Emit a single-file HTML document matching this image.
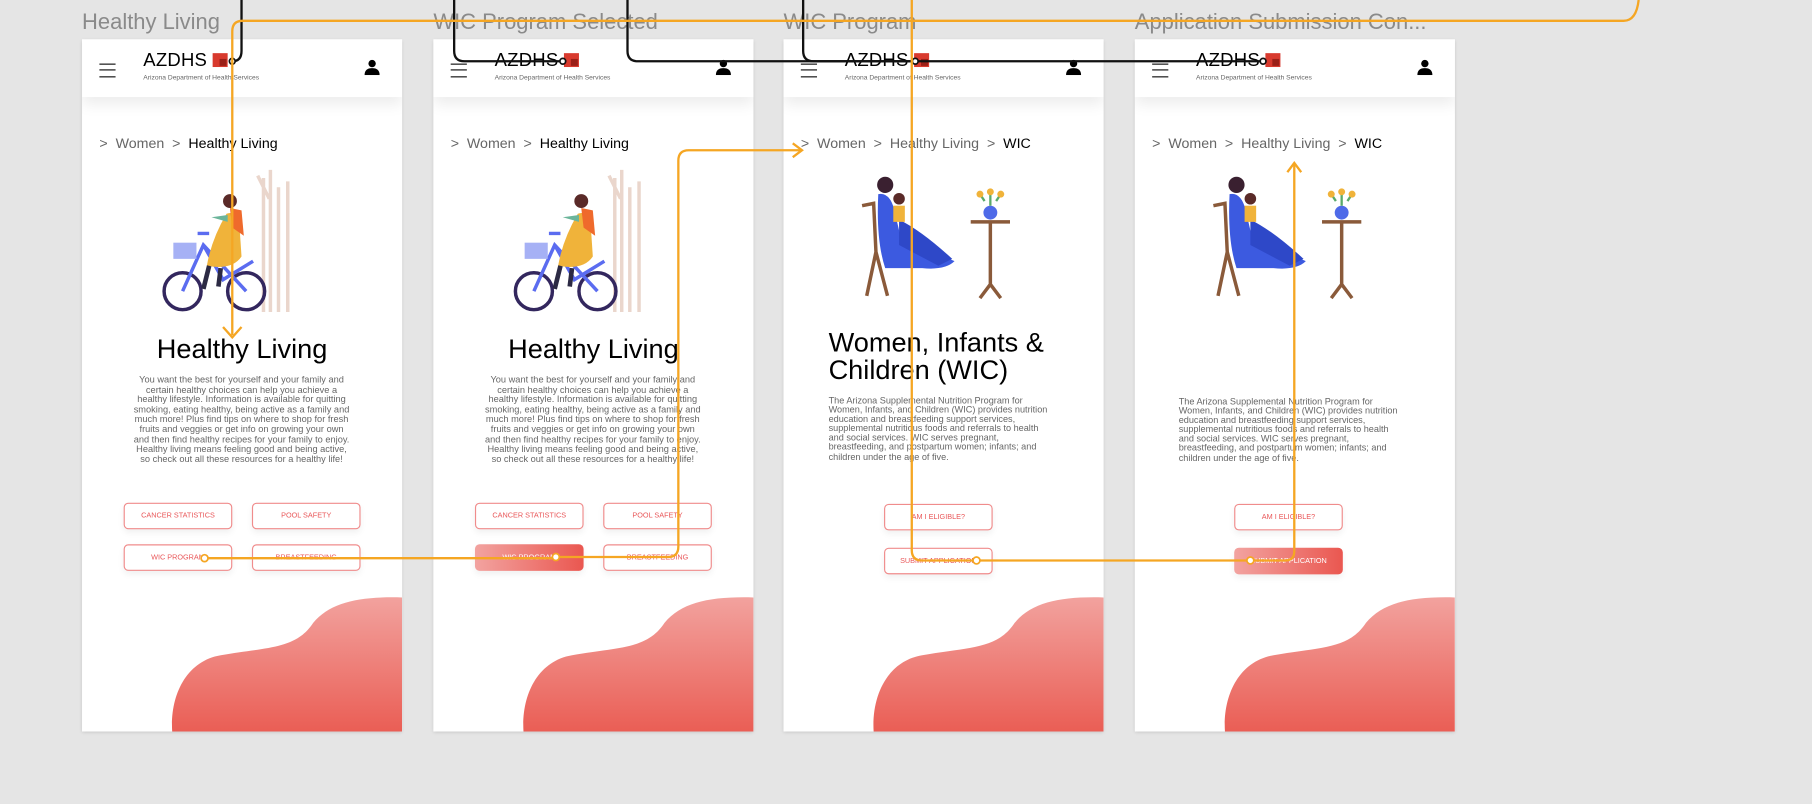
<!DOCTYPE html>
<html><head><meta charset="utf-8">
<style>
html,body{margin:0;padding:0;background:#e5e5e5;overflow:hidden;width:1812px;height:804px;font-family:"Liberation Sans",sans-serif;}
#s{position:absolute;left:0;top:0;width:1568px;height:696px;transform:scale(1.15561);transform-origin:0 0;}
.t{position:absolute;top:9px;font-size:19px;color:#8a8a8a;white-space:nowrap;}
.f{position:absolute;top:34px;width:277px;height:599px;background:#fff;overflow:hidden;box-shadow:0 1px 3px rgba(0,0,0,.15);}
.hd{position:absolute;left:0;top:0;width:277px;height:50px;background:#fff;box-shadow:0 6px 12px rgba(0,0,0,.08);z-index:2}
.hb{position:absolute;left:15px;top:21px;width:14px;height:10px;border-top:1.5px solid #111;border-bottom:1.5px solid #111;}
.hb:after{content:"";position:absolute;left:0;top:3.5px;width:14px;height:1.5px;background:#111}
.az{position:absolute;left:53px;top:10px;font-size:16px;color:#000;letter-spacing:.2px}
.lg{position:absolute;left:113px;top:12px;width:13px;height:12px;background:#d83a2e;}
.lg:after{content:"";position:absolute;left:6px;top:5px;width:6px;height:6px;background:#9a2018}
.sub{position:absolute;left:53px;top:31px;font-size:5.8px;color:#666}
.us{position:absolute;left:244px;top:17px;width:14px;height:14px}
.bc{position:absolute;left:15px;top:83px;font-size:12.3px;color:#666;white-space:nowrap}
.bc b{font-weight:normal;color:#000}
.h1{position:absolute;left:0;width:277px;text-align:center;font-size:23.5px;color:#000}
.p{position:absolute;font-size:8px;line-height:8.6px;color:#666}
.btn{position:absolute;width:94px;height:23px;box-sizing:border-box;border:1px solid #f08c8c;border-radius:4px;font-size:6.3px;color:#e9585a;text-align:center;line-height:21px;box-shadow:0 3px 6px rgba(0,0,0,.06);white-space:nowrap;background:#fff}
.sel{background:linear-gradient(90deg,#f2a3a0,#ea5750);color:#fff;border:none;line-height:23px}
.blob{position:absolute;left:0;top:0}
</style></head><body><div id="s">

<div class="t" style="left:71px">Healthy Living</div>
<div class="t" style="left:375px">WIC Program Selected</div>
<div class="t" style="left:678px">WIC Program</div>
<div class="t" style="left:982px">Application Submission Con...</div>

<div class="f" style="left:71px">
 <div class="hd"><div class="hb"></div><div class="az">AZDHS</div><div class="lg"></div><div class="sub">Arizona Department of Health Services</div>
 <svg class="us" viewBox="0 0 14 14"><circle cx="7" cy="4" r="3.2" fill="#000"/><path d="M0.5 14 Q0.5 8 7 8 Q13.5 8 13.5 14Z" fill="#000"/></svg></div>
 <div class="bc">&gt;&nbsp; Women &nbsp;&gt;&nbsp; <b>Healthy Living</b></div>
 <svg style="position:absolute;left:60px;top:108px" width="140" height="130" viewBox="0 0 140 130">
  <g stroke="#ead6cc" stroke-width="3" fill="none"><path d="M97 128V12M103 128V5M110 128V20M118 128V15M92 10L102 30"/></g>
  <circle cx="27" cy="110" r="16" stroke="#33275e" stroke-width="3" fill="none"/><circle cx="82" cy="110" r="16" stroke="#33275e" stroke-width="3" fill="none"/>
  <path d="M27 110L45 70L82 110M45 70L62 100L88 84M40 60H50" stroke="#5b6cf0" stroke-width="3" fill="none"/>
  <rect x="19" y="68" width="20" height="14" fill="#a6b1f5"/>
  <path d="M65 43Q72 40 76 50L78 80Q70 92 48 88Q52 65 65 43Z" fill="#f0b33a"/>
  <path d="M68 38L78 40L80 62L70 55Z" fill="#ef6a2c"/>
  <circle cx="68" cy="32" r="6" fill="#5a2a28"/>
  <path d="M52 46L66 50L66 44Z" fill="#6bb59a"/>
  <path d="M50 88L45 108M60 90L58 106" stroke="#2c2a44" stroke-width="4"/>
 </svg>
 <div class="h1" style="top:255px">Healthy Living</div>
 <div class="p" style="left:43px;width:190px;text-align:center;top:291px">You want the best for yourself and your family and certain healthy choices can help you achieve a healthy lifestyle. Information is available for quitting smoking, eating healthy, being active as a family and much more! Plus find tips on where to shop for fresh fruits and veggies or get info on growing your own and then find healthy recipes for your family to enjoy. Healthy living means feeling good and being active, so check out all these resources for a healthy life!</div>
 <div class="btn" style="left:36px;top:401px">CANCER STATISTICS</div>
 <div class="btn" style="left:147px;top:401px">POOL SAFETY</div>
 <div class="btn" style="left:36px;top:437px">WIC PROGRAM</div>
 <div class="btn" style="left:147px;top:437px">BREASTFEEDING</div>
 <svg class="blob" width="277" height="599"><defs><linearGradient id="g1" x1="0" y1="0" x2="0" y2="1"><stop offset="0" stop-color="#f2a29e"/><stop offset="1" stop-color="#ea5e55"/></linearGradient></defs><path d="M78,599 C76,568 90,538 120,533 C160,526 185,528 200,505 C215,487 240,482 277,483 V599 Z" fill="url(#g1)"/></svg>
</div>

<div class="f" style="left:375px">
 <div class="hd"><div class="hb"></div><div class="az">AZDHS</div><div class="lg"></div><div class="sub">Arizona Department of Health Services</div>
 <svg class="us" viewBox="0 0 14 14"><circle cx="7" cy="4" r="3.2" fill="#000"/><path d="M0.5 14 Q0.5 8 7 8 Q13.5 8 13.5 14Z" fill="#000"/></svg></div>
 <div class="bc">&gt;&nbsp; Women &nbsp;&gt;&nbsp; <b>Healthy Living</b></div>
 <svg style="position:absolute;left:60px;top:108px" width="140" height="130" viewBox="0 0 140 130">
  <g stroke="#ead6cc" stroke-width="3" fill="none"><path d="M97 128V12M103 128V5M110 128V20M118 128V15M92 10L102 30"/></g>
  <circle cx="27" cy="110" r="16" stroke="#33275e" stroke-width="3" fill="none"/><circle cx="82" cy="110" r="16" stroke="#33275e" stroke-width="3" fill="none"/>
  <path d="M27 110L45 70L82 110M45 70L62 100L88 84M40 60H50" stroke="#5b6cf0" stroke-width="3" fill="none"/>
  <rect x="19" y="68" width="20" height="14" fill="#a6b1f5"/>
  <path d="M65 43Q72 40 76 50L78 80Q70 92 48 88Q52 65 65 43Z" fill="#f0b33a"/>
  <path d="M68 38L78 40L80 62L70 55Z" fill="#ef6a2c"/>
  <circle cx="68" cy="32" r="6" fill="#5a2a28"/>
  <path d="M52 46L66 50L66 44Z" fill="#6bb59a"/>
  <path d="M50 88L45 108M60 90L58 106" stroke="#2c2a44" stroke-width="4"/>
 </svg>
 <div class="h1" style="top:255px">Healthy Living</div>
 <div class="p" style="left:43px;width:190px;text-align:center;top:291px">You want the best for yourself and your family and certain healthy choices can help you achieve a healthy lifestyle. Information is available for quitting smoking, eating healthy, being active as a family and much more! Plus find tips on where to shop for fresh fruits and veggies or get info on growing your own and then find healthy recipes for your family to enjoy. Healthy living means feeling good and being active, so check out all these resources for a healthy life!</div>
 <div class="btn" style="left:36px;top:401px">CANCER STATISTICS</div>
 <div class="btn" style="left:147px;top:401px">POOL SAFETY</div>
 <div class="btn sel" style="left:36px;top:437px">WIC PROGRAM</div>
 <div class="btn" style="left:147px;top:437px">BREASTFEEDING</div>
 <svg class="blob" width="277" height="599"><path d="M78,599 C76,568 90,538 120,533 C160,526 185,528 200,505 C215,487 240,482 277,483 V599 Z" fill="url(#g1)"/></svg>
</div>

<div class="f" style="left:678px">
 <div class="hd"><div class="hb"></div><div class="az">AZDHS</div><div class="lg"></div><div class="sub">Arizona Department of Health Services</div>
 <svg class="us" viewBox="0 0 14 14"><circle cx="7" cy="4" r="3.2" fill="#000"/><path d="M0.5 14 Q0.5 8 7 8 Q13.5 8 13.5 14Z" fill="#000"/></svg></div>
 <div class="bc">&gt;&nbsp; Women &nbsp;&gt;&nbsp; Healthy Living &nbsp;&gt;&nbsp; <b>WIC</b></div>
 <svg style="position:absolute;left:60px;top:114px" width="140" height="112" viewBox="0 0 140 112">
  <path d="M8 30L18 28L20 70L12 108M20 70L30 108" stroke="#8a5a3a" stroke-width="3" fill="none"/>
  <circle cx="28" cy="12" r="7" fill="#3a2030"/>
  <path d="M22 20Q32 18 36 34L42 60Q70 70 88 78Q80 86 60 84L28 84Q20 60 22 20Z" fill="#3c5ae0"/>
  <path d="M40 42Q60 52 86 76L74 82L40 64Z" fill="#2e48c8"/>
  <circle cx="40" cy="24" r="5" fill="#5a2a28"/><rect x="35" y="30" width="10" height="14" fill="#f0b33a"/>
  <path d="M102 44H136M119 44V98M110 110L119 98L128 110" stroke="#8a5a3a" stroke-width="3" fill="none"/>
  <circle cx="119" cy="36" r="6" fill="#4e6ae8"/><path d="M119 30V20M114 26L110 20M124 26L128 20" stroke="#5aaa6a" stroke-width="2"/><circle cx="110" cy="20" r="3" fill="#f0b33a"/><circle cx="128" cy="20" r="3" fill="#f0b33a"/><circle cx="119" cy="18" r="3" fill="#f0b33a"/>
 </svg>
 <div class="h1" style="top:250px;left:39px;text-align:left;line-height:24px">Women, Infants &amp;<br>Children (WIC)</div>
 <div class="p" style="left:39px;width:192px;top:309px;line-height:8.1px;font-size:7.9px">The Arizona Supplemental Nutrition Program for Women, Infants, and Children (WIC) provides nutrition education and breastfeeding support services, supplemental nutritious foods and referrals to health and social services. WIC serves pregnant, breastfeeding, and postpartum women; infants; and children under the age of five.</div>
 <div class="btn" style="left:87px;top:402px">AM I ELIGIBLE?</div>
 <div class="btn" style="left:87px;top:440px">SUBMIT APPLICATION</div>
 <svg class="blob" width="277" height="599"><path d="M78,599 C76,568 90,538 120,533 C160,526 185,528 200,505 C215,487 240,482 277,483 V599 Z" fill="url(#g1)"/></svg>
</div>

<div class="f" style="left:982px">
 <div class="hd"><div class="hb"></div><div class="az">AZDHS</div><div class="lg"></div><div class="sub">Arizona Department of Health Services</div>
 <svg class="us" viewBox="0 0 14 14"><circle cx="7" cy="4" r="3.2" fill="#000"/><path d="M0.5 14 Q0.5 8 7 8 Q13.5 8 13.5 14Z" fill="#000"/></svg></div>
 <div class="bc">&gt;&nbsp; Women &nbsp;&gt;&nbsp; Healthy Living &nbsp;&gt;&nbsp; <b>WIC</b></div>
 <svg style="position:absolute;left:60px;top:114px" width="140" height="112" viewBox="0 0 140 112">
  <path d="M8 30L18 28L20 70L12 108M20 70L30 108" stroke="#8a5a3a" stroke-width="3" fill="none"/>
  <circle cx="28" cy="12" r="7" fill="#3a2030"/>
  <path d="M22 20Q32 18 36 34L42 60Q70 70 88 78Q80 86 60 84L28 84Q20 60 22 20Z" fill="#3c5ae0"/>
  <path d="M40 42Q60 52 86 76L74 82L40 64Z" fill="#2e48c8"/>
  <circle cx="40" cy="24" r="5" fill="#5a2a28"/><rect x="35" y="30" width="10" height="14" fill="#f0b33a"/>
  <path d="M102 44H136M119 44V98M110 110L119 98L128 110" stroke="#8a5a3a" stroke-width="3" fill="none"/>
  <circle cx="119" cy="36" r="6" fill="#4e6ae8"/><path d="M119 30V20M114 26L110 20M124 26L128 20" stroke="#5aaa6a" stroke-width="2"/><circle cx="110" cy="20" r="3" fill="#f0b33a"/><circle cx="128" cy="20" r="3" fill="#f0b33a"/><circle cx="119" cy="18" r="3" fill="#f0b33a"/>
 </svg>
 <div class="p" style="left:38px;width:192px;top:310px;line-height:8.1px;font-size:7.9px">The Arizona Supplemental Nutrition Program for Women, Infants, and Children (WIC) provides nutrition education and breastfeeding support services, supplemental nutritious foods and referrals to health and social services. WIC serves pregnant, breastfeeding, and postpartum women; infants; and children under the age of five.</div>
 <div class="btn" style="left:86px;top:402px">AM I ELIGIBLE?</div>
 <div class="btn sel" style="left:86px;top:440px">SUBMIT APPLICATION</div>
 <svg class="blob" width="277" height="599"><path d="M78,599 C76,568 90,538 120,533 C160,526 185,528 200,505 C215,487 240,482 277,483 V599 Z" fill="url(#g1)"/></svg>
</div>

<svg style="position:absolute;left:0;top:0;z-index:10" width="1568" height="696" viewBox="0 0 1568 696" fill="none">
 <g stroke="#111" stroke-width="2">
  <path d="M209,0 V44 Q209,53 201,53"/>
  <path d="M393,0 V44 Q393,53 402,53 H487"/>
  <path d="M543,0 V44 Q543,53 552,53 H1093"/>
  <path d="M695,0 V44 Q695,53 704,53 H792"/>
 </g>
 <g fill="#fff" stroke="#111" stroke-width="1.5">
  <circle cx="201" cy="53" r="2.5"/><circle cx="487" cy="53" r="2.5"/><circle cx="792" cy="53" r="2.5"/><circle cx="1093" cy="53" r="2.5"/>
 </g>
 <g stroke="#f5a623" stroke-width="2">
  <path d="M201,290 V27 Q201,18 210,18 H1405 Q1416,18 1418,0"/>
  <path d="M193,283 L201,292 L209,283"/>
  <path d="M177,483 H481"/>
  <path d="M481,482 H578 Q587,482 587,473 V139 Q587,130 596,130 H693"/>
  <path d="M686,124 L694,130 L686,136"/>
  <path d="M845,485 H798 Q789,485 789,476 V0"/>
  <path d="M845,485 H1112 Q1120,485 1120,477 V142"/>
  <path d="M1114,149 L1120,141 L1126,149"/>
 </g>
 <g fill="#fff" stroke="#f5a623" stroke-width="1.5">
  <circle cx="177" cy="483" r="3"/><circle cx="481" cy="482" r="3"/><circle cx="845" cy="485" r="3"/><circle cx="1082" cy="485" r="3"/>
 </g>
</svg>
</div></body></html>
